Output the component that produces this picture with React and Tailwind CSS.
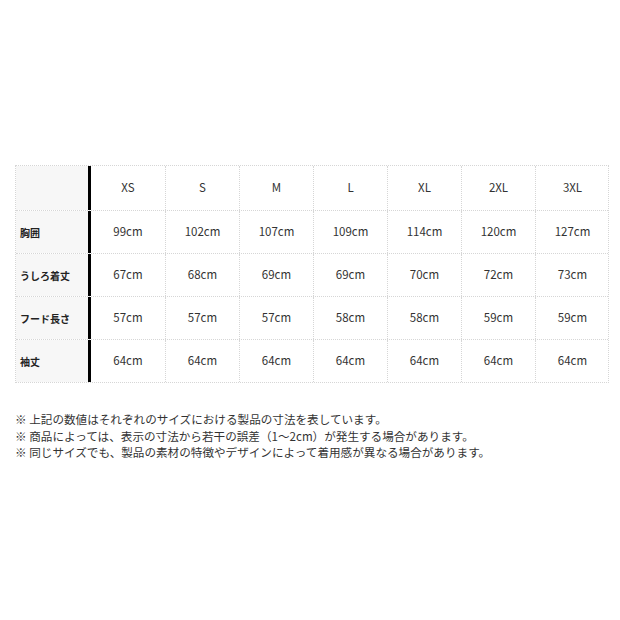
const SIZES = ['XS', 'S', 'M', 'L', 'XL', '2XL', '3XL'];

const ROWS = [
  { label: '胸囲', values: ['99cm', '102cm', '107cm', '109cm', '114cm', '120cm', '127cm'] },
  { label: 'うしろ着丈', values: ['67cm', '68cm', '69cm', '69cm', '70cm', '72cm', '73cm'] },
  { label: 'フード長さ', values: ['57cm', '57cm', '57cm', '58cm', '58cm', '59cm', '59cm'] },
  { label: '袖丈', values: ['64cm', '64cm', '64cm', '64cm', '64cm', '64cm', '64cm'] },
];

const NOTES = [
  '※ 上記の数値はそれぞれのサイズにおける製品の寸法を表しています。',
  '※ 商品によっては、表示の寸法から若干の誤差（1〜2cm）が発生する場合があります。',
  '※ 同じサイズでも、製品の素材の特徴やデザインによって着用感が異なる場合があります。',
];

const font = { fontFamily: '"Noto Sans CJK JP", "Noto Sans", sans-serif' };

function Row({ label, values, header }) {
  return (
    <div className={`flex ${header ? 'h-[44px]' : 'h-[43px] border-t border-dotted border-[#d6d6d6]'}`}>
      <div className="w-[72px] shrink-0 bg-[#f7f7f7] flex items-center pl-[4px] text-[10px] font-bold text-[#222]">
        {label}
      </div>
      <div className="w-[3px] shrink-0 bg-black" />
      {values.map((v, i) => (
        <div
          key={i}
          className={`w-[74px] shrink-0 flex items-center justify-center text-[11.5px] text-[#333] ${i > 0 ? 'border-l border-dotted border-[#d6d6d6]' : ''}`}
        >
          {v}
        </div>
      ))}
    </div>
  );
}

export default function App() {
  return (
    <div className="w-[620px] h-[620px] bg-white pt-[165px] pl-[15px]" style={font}>
      <div className="w-[594px] border border-dotted border-[#d6d6d6]">
        <Row label="" values={SIZES} header />
        {ROWS.map((r) => (
          <Row key={r.label} label={r.label} values={r.values} />
        ))}
      </div>
      <div className="mt-[28px] text-[11.6px] leading-[16.5px] text-[#333]">
        {NOTES.map((n) => (
          <p key={n}>{n}</p>
        ))}
      </div>
    </div>
  );
}
